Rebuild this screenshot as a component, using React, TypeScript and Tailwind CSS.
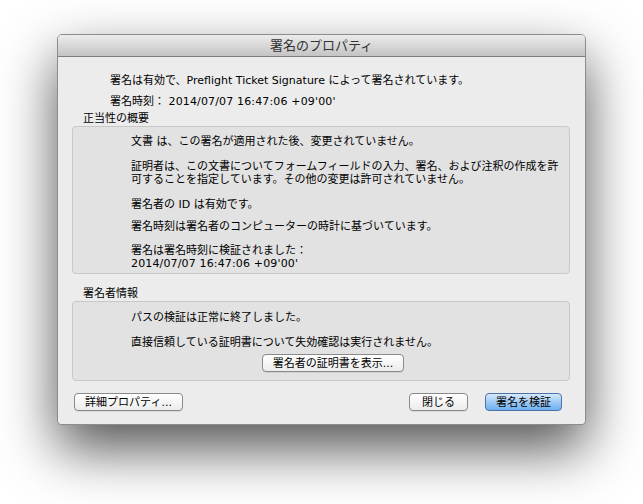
export default function App() {
  const btn =
    "h-[18px] flex items-center justify-center rounded-[4px] border border-[#8a8a8a] bg-gradient-to-b from-[#ffffff] to-[#ececec] shadow-[0_1px_0_rgba(0,0,0,0.08)] text-[11px] leading-[13px] text-black";
  return (
    <div className="min-h-[504px] w-[643px] bg-white pt-[34px] pl-[57px] font-['DejaVu_Sans','Noto_Sans_CJK_JP',sans-serif]">
      <div className="w-[529px] h-[391px] flex flex-col bg-[#ececec] border border-[#8c8c8c] rounded-t-[5px] rounded-b-[4px] shadow-[0_24px_55px_rgba(0,0,0,0.68)] overflow-hidden">
        <div className="h-[22px] shrink-0 flex items-center justify-center bg-gradient-to-b from-[#ececec] to-[#c4c4c4] border-b border-[#7c7c7c] text-[13px] text-[#333333]">
          <span className="mt-[1px]">署名のプロパティ</span>
        </div>
        <div className="flex flex-col pl-[14px] pr-[15px] text-[11px] leading-[13px] text-black">
          <p className="mt-[17px] pl-[38px]">
            署名は有効で、Preflight Ticket Signature によって署名されています。
          </p>
          <p className="mt-[8px] pl-[38px]">
            署名時刻： <span className="tracking-[0.15px]">2014/07/07 16:47:06 +09'00'</span>
          </p>
          <p className="mt-[4px] pl-[11px]">正当性の概要</p>
          <div className="mt-[1px] h-[148px] rounded-[4px] border border-[#c8c8c8] bg-[#e2e2e2] pl-[58px] pt-[8px]">
            <p>文書 は、この署名が適用された後、変更されていません。</p>
            <p className="mt-[12px]">
              証明者は、この文書についてフォームフィールドの入力、署名、および注釈の作成を許
              <br />
              可することを指定しています。その他の変更は許可されていません。
            </p>
            <p className="mt-[12px]">署名者の ID は有効です。</p>
            <p className="mt-[9px]">署名時刻は署名者のコンピューターの時計に基づいています。</p>
            <p className="mt-[11px]">
              署名は署名時刻に検証されました：
              <br />
              <span className="tracking-[0.15px]">2014/07/07 16:47:06 +09'00'</span>
            </p>
          </div>
          <p className="mt-[13px] pl-[11px]">署名者情報</p>
          <div className="mt-[1px] h-[80px] rounded-[4px] border border-[#c8c8c8] bg-[#e2e2e2] pl-[58px] pt-[9px]">
            <p>パスの検証は正常に終了しました。</p>
            <p className="mt-[12px]">直接信頼している証明書について失効確認は実行されません。</p>
            <div className="mt-[5px] flex">
              <button
                className={`${btn} ml-[131px] w-[142px] shadow-[0_0_0_2px_#8db9ec]`}
              >
                署名者の証明書を表示...
              </button>
            </div>
          </div>
          <div className="mt-[12px] flex items-center pl-[2px] pr-[8px]">
            <button className={`${btn} w-[109px]`}>詳細プロパティ...</button>
            <div className="flex-1" />
            <button className={`${btn} w-[59px]`}>閉じる</button>
            <button className="ml-[17px] w-[77px] h-[18px] flex items-center justify-center rounded-[4px] border border-[#4d72a8] bg-gradient-to-b from-[#d6e9fc] via-[#9fcaf3] to-[#6cb0f0] text-[11px] leading-[13px] text-black">
              署名を検証
            </button>
          </div>
        </div>
      </div>
    </div>
  );
}
